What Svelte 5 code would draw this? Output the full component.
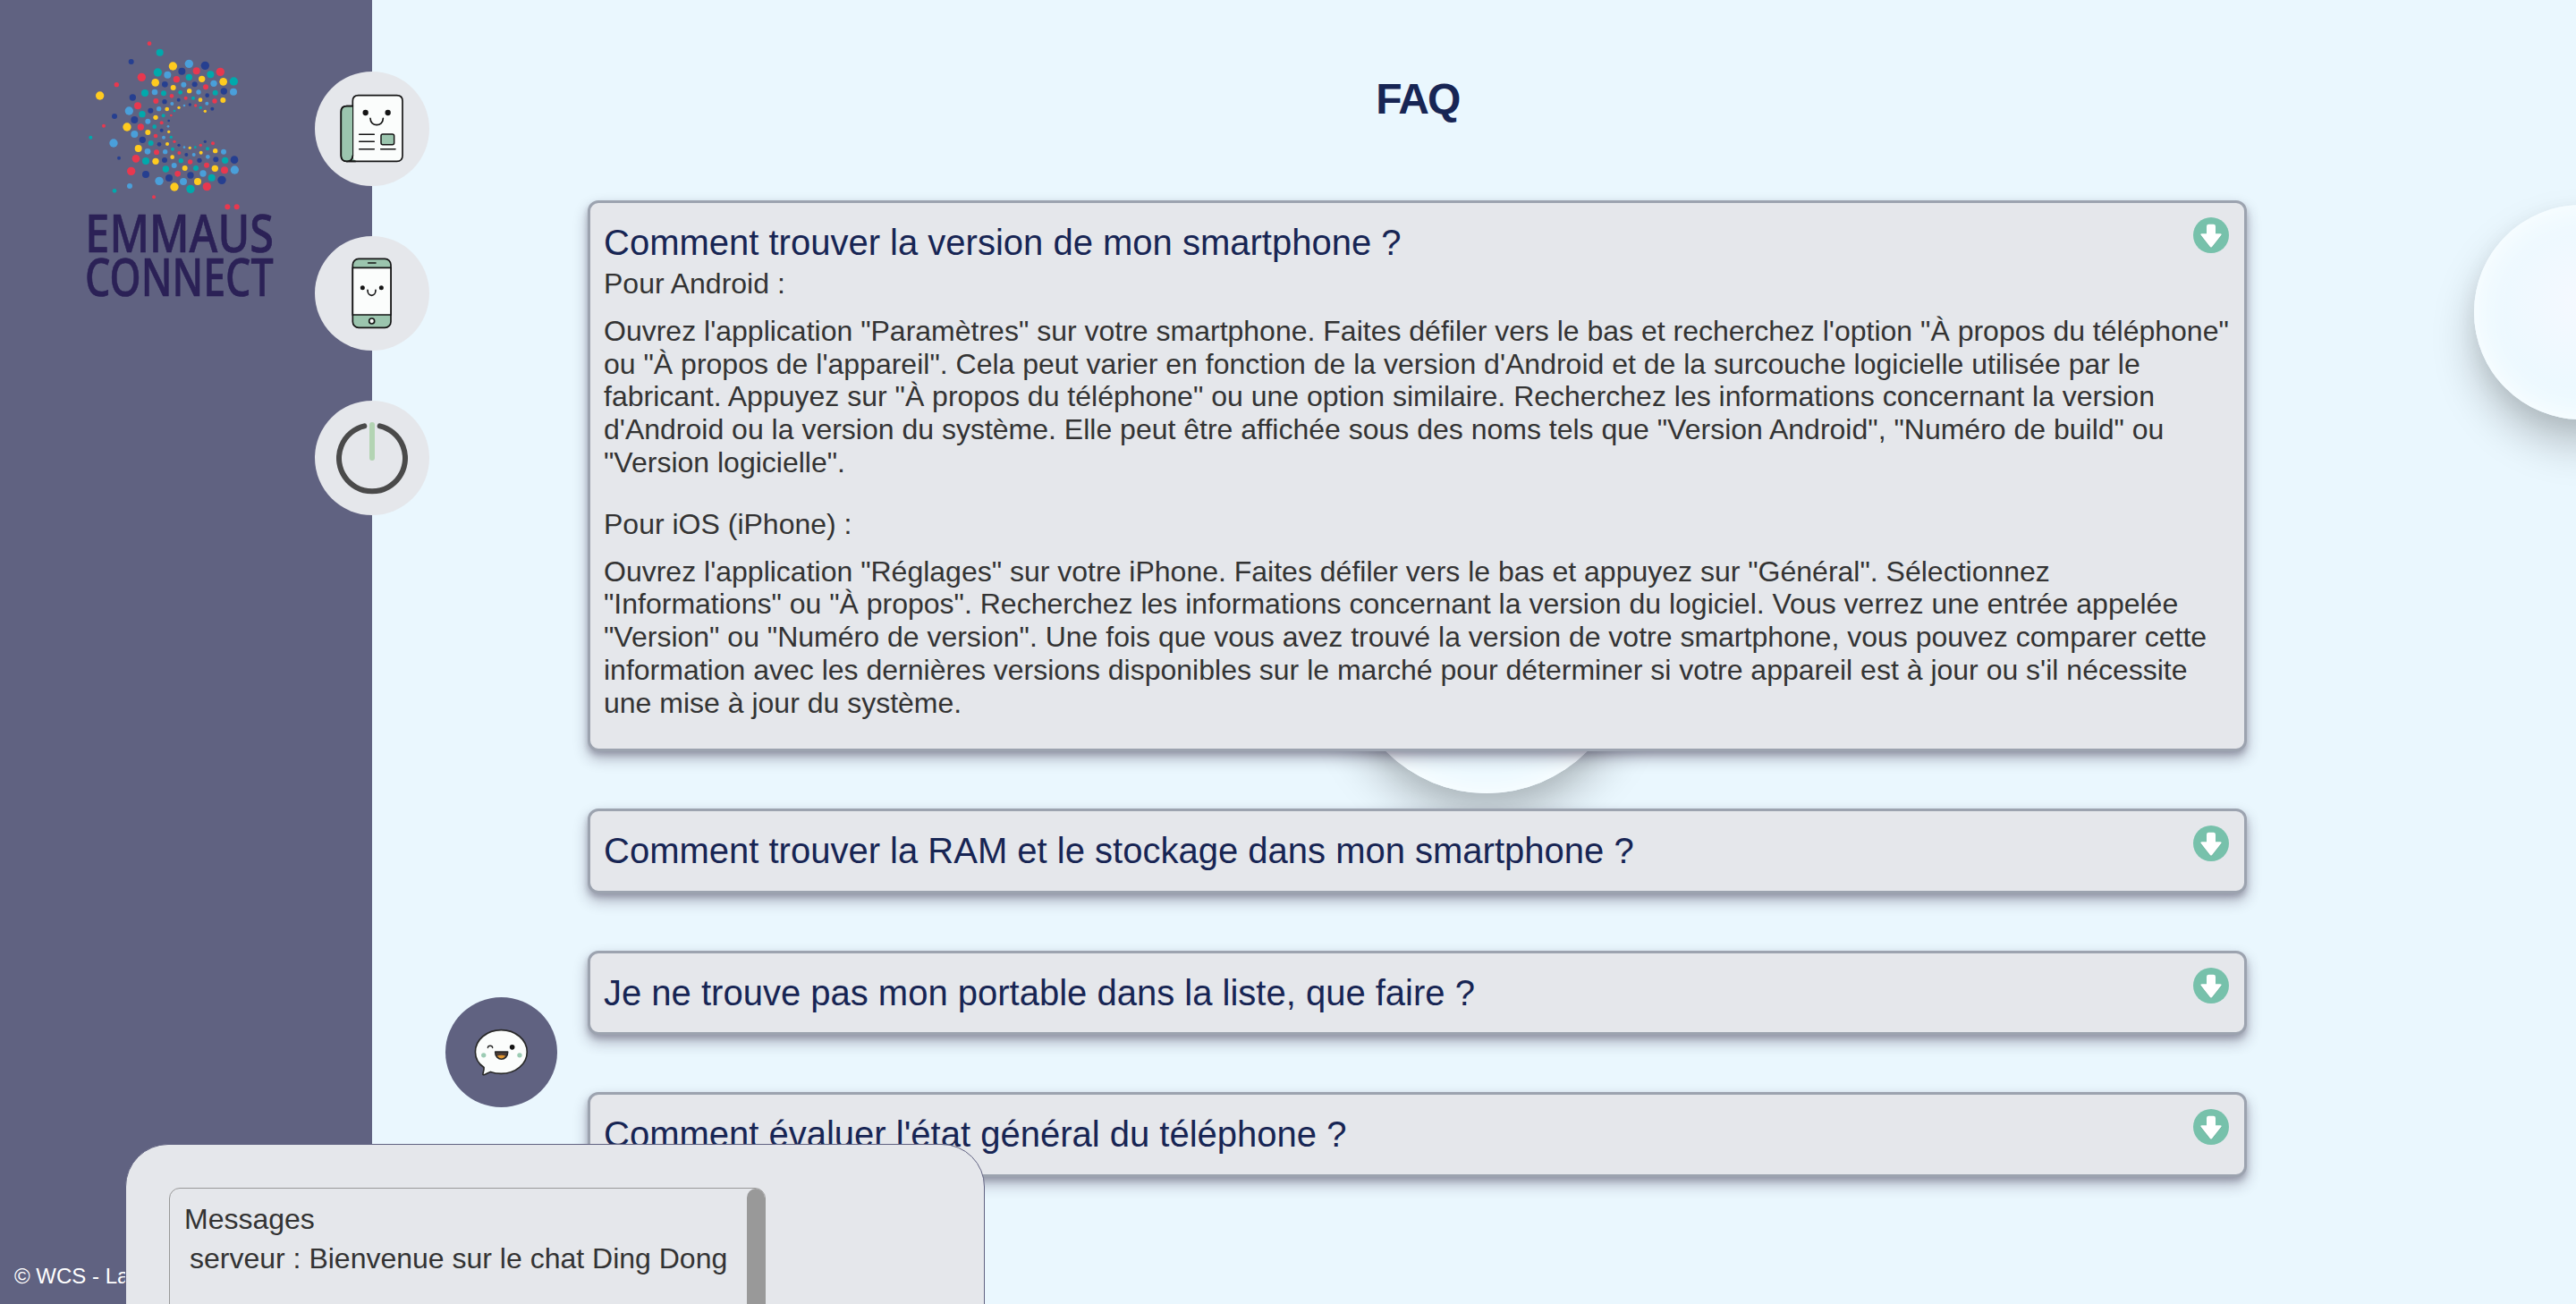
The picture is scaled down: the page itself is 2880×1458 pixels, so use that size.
<script>
  const R = '#e8384f', Y = '#ffcb1f', T = '#00a9ac', B = '#4a9fda', N = '#263f90';
  // Logo dots: [x, y, radius, colour]
  const dots = [
    [261,56,7,R],[296,86,12,T],[200,117,9,N],[235,169,14,R],[151,194,8,R],[95,231,14,Y],[289,153,14,T],[340,132,14,Y],
    [394,124,14,B],[448,130,14,N],[499,151,14,R],[544,183,14,T],[543,218,12,B],[509,184,13,Y],[466,160,12,T],[419,148,12,R],
    [370,149,12,N],[322,161,12,B],[281,187,13,Y],[246,222,12,T],[205,237,11,N],[222,265,12,R],[193,282,14,B],[144,300,9,N],
    [108,332,6,R],[186,336,14,Y],[64,371,6,T],[141,390,14,B],[211,312,12,N],[237,293,11,T],[265,281,9,N],[283,249,9,R],
    [279,219,10,B],[313,193,10,N],[352,176,11,R],[394,169,11,T],[437,175,11,Y],[477,190,11,B],[511,216,11,N],[508,246,9,Y],
    [482,221,9,T],[450,202,9,R],[413,193,9,N],[376,194,9,B],[341,204,9,Y],[309,223,9,T],[312,251,8,N],[293,275,8,B],
    [282,304,8,Y],[256,317,9,B],[232,336,11,R],[211,360,12,B],[238,379,11,N],[256,354,9,Y],[278,335,7,T],[302,322,6,R],
    [308,298,6,T],[320,276,7,Y],[336,232,7,R],[365,220,7,T],[395,215,8,Y],[426,219,8,B],[455,230,7,N],[480,249,8,R],
    [472,275,6,N],[454,257,6,B],[432,245,7,Y],[408,239,6,T],[383,239,6,R],[359,245,6,N],[337,258,6,B],[360,271,5,Y],
    [378,264,4,B],[397,261,5,N],[416,264,5,R],[433,271,5,T],[448,283,5,Y],[345,282,4,T],[334,297,4,R],[326,315,4,N],
    [324,334,4,B],[326,352,5,Y],[334,370,5,T],[345,385,5,R],[360,397,5,N],[378,404,4,B],[397,406,5,Y],[415,404,4,T],
    [433,397,5,R],[448,385,5,N],[474,391,6,R],[456,409,6,T],[434,422,6,Y],[410,429,6,B],[385,429,6,N],[361,423,6,R],
    [339,410,6,T],[321,393,6,Y],[309,371,6,B],[302,347,6,N],[282,366,7,R],[266,390,9,T],[294,394,7,N],[314,419,8,B],
    [285,421,9,R],[255,418,10,B],[224,408,12,Y],[216,442,13,R],[249,450,12,T],[282,451,11,Y],[312,447,9,N],[338,437,7,Y],
    [367,449,8,T],[398,453,8,R],[429,448,8,N],[457,436,7,B],[482,416,8,Y],[510,419,9,B],[484,445,9,N],[515,448,11,T],
    [546,446,13,N],[547,480,14,B],[513,481,12,R],[481,475,11,Y],[453,464,9,R],[417,474,9,T],[380,474,9,Y],[344,465,9,B],
    [316,477,11,T],[249,495,12,N],[200,484,14,R],[159,440,6,N],[356,493,10,R],[399,498,11,N],[441,492,11,B],[470,506,12,T],
    [504,514,14,N],[454,536,14,R],[423,519,12,Y],[375,519,12,B],[327,507,12,N],[294,517,14,B],[345,537,14,Y],[399,544,14,T],
    [195,534,9,B],[144,550,7,T],[276,571,6,R],[523,604,9,R],[554,604,9,R]
  ];

  const faqs = [
    {
      question: 'Comment trouver la version de mon smartphone ?',
      answers: [
        ['Pour Android :', `Ouvrez l'application "Paramètres" sur votre smartphone. Faites défiler vers le bas et recherchez l'option "À propos du téléphone" ou "À propos de l'appareil". Cela peut varier en fonction de la version d'Android et de la surcouche logicielle utilisée par le fabricant. Appuyez sur "À propos du téléphone" ou une option similaire. Recherchez les informations concernant la version d'Android ou la version du système. Elle peut être affichée sous des noms tels que "Version Android", "Numéro de build" ou "Version logicielle".`],
        ['Pour iOS (iPhone) :', `Ouvrez l'application "Réglages" sur votre iPhone. Faites défiler vers le bas et appuyez sur "Général". Sélectionnez "Informations" ou "À propos". Recherchez les informations concernant la version du logiciel. Vous verrez une entrée appelée "Version" ou "Numéro de version". Une fois que vous avez trouvé la version de votre smartphone, vous pouvez comparer cette information avec les dernières versions disponibles sur le marché pour déterminer si votre appareil est à jour ou s'il nécessite une mise à jour du système.`]
      ]
    },
    { question: 'Comment trouver la RAM et le stockage dans mon smartphone ?', answers: [] },
    { question: 'Je ne trouve pas mon portable dans la liste, que faire ?', answers: [] },
    { question: "Comment évaluer l'état général du téléphone ?", answers: [] }
  ];
</script>

<div class="page">
  <aside>
    <svg class="logo" viewBox="0 0 750 960">
      {#each dots as [x, y, r, fill]}
        <circle cx={x} cy={y} {r} {fill} />
      {/each}
      <text x="46" y="756" textLength="632" lengthAdjust="spacingAndGlyphs">EMMAUS</text>
      <text x="45" y="904" textLength="632" lengthAdjust="spacingAndGlyphs">CONNECT</text>
    </svg>
    <nav>
      <button class="round" aria-label="Articles">
        <svg viewBox="0 0 384 384" fill="none" stroke="#151515" stroke-width="5" stroke-linecap="round">
          <path d="M127 116H107q-19 0-19 19V282q0 19 19 19h30" fill="#9bc5ae" />
          <rect x="127" y="80" width="167" height="221" rx="18" fill="#fbfdfc" stroke="none" />
          <path d="M107 301h168q19 0 19-19V99q0-19-19-19H146q-19 0-19 19V282q0 19-20 19" />
          <path d="M90 137V282q0 17 18 17t18-17V118H108q-18 0-18 19z" fill="#9bc5ae" stroke="none" />
          <path d="M127 116H107q-19 0-19 19V282q0 19 19 19t20-19" />
          <path d="M186 157c0 29 43 29 43 0" />
          <g stroke-width="4.5"><path d="M149 211h50M149 235h50M149 260h50M221 260h49" /><rect x="222" y="210" width="44" height="35" rx="6" fill="#9bc5ae" /></g>
          <g fill="#151515" stroke="none"><circle cx="170" cy="138" r="9.5" /><circle cx="245" cy="138" r="9.5" /></g>
        </svg>
      </button>
      <button class="round" aria-label="Smartphones">
        <svg viewBox="0 0 384 384" fill="none" stroke="#151515" stroke-width="5" stroke-linecap="round">
          <rect x="127" y="76" width="128" height="231" rx="20" fill="#9bc5ae" />
          <path d="M127 106h128v158H127z" fill="#fbfdfc" />
          <path d="M179 90h25M177 181c0 24 27 24 27 0" />
          <circle cx="191" cy="285" r="9" fill="#fbfdfc" />
          <g fill="#151515" stroke="none"><circle cx="160" cy="173" r="7.5" /><circle cx="223" cy="173" r="7.5" /></g>
        </svg>
      </button>
      <button class="round" aria-label="Déconnexion">
        <svg viewBox="0 0 384 384" fill="none" stroke-width="18" stroke-linecap="round">
          <path d="M166 85A111 111 0 1 0 218 85" stroke="#4a4a4a" />
          <path d="M192 81V192" stroke="#b3d4b3" />
        </svg>
      </button>
    </nav>
    <footer>© WCS - La Loupe</footer>
  </aside>

  <main>
    <span class="bubble bubble-right"></span>
    <span class="bubble bubble-center"></span>
    <h1>FAQ</h1>
    {#each faqs as { question, answers }}
      <article class:open={answers.length > 0}>
        <h2>{question}</h2>
        {#each answers as [title, text]}
          <h3>{title}</h3>
          <p>{text}</p>
        {/each}
        <svg class="arrow" viewBox="0 0 120 120">
          <circle cx="60" cy="60" r="60" fill="#77c1ab" />
          <path d="M45 30q0-7 7-7h16q7 0 7 7v25h16q6 0 3 5L64 98q-4 5-8 0L26 60q-3-5 3-5h16z" fill="#5da38e" transform="translate(0 2)" />
          <path d="M45 30q0-7 7-7h16q7 0 7 7v25h16q6 0 3 5L64 98q-4 5-8 0L26 60q-3-5 3-5h16z" fill="#fff" />
        </svg>
      </article>
    {/each}
  </main>

  <button class="chat-toggle" aria-label="Chat">
    <svg viewBox="0 0 375 370" fill="none" stroke="#2a2a2a" stroke-width="5" stroke-linecap="round" stroke-linejoin="round">
      <path d="M129 236C110 223 100 205 100 184c0-41 39-74 87-74s87 33 87 74-39 73-87 73c-13 0-25-2-36-6-9 3-15 8-22 10-8 1 1-11 0-25z" fill="#fbfdfc" />
      <path d="M142 170c0-9 16-9 16 0" stroke-width="4" />
      <circle cx="224" cy="168" r="8.5" fill="#151515" stroke="none" />
      <path d="M167 184h42c0 32-42 32-42 0z" fill="#4a3b34" />
      <path d="M173 198q14-6 29 0-14 16-29 0z" fill="#e0952f" stroke="none" />
      <g fill="#9bcbb3" stroke="none"><circle cx="128" cy="195" r="8" /><circle cx="249" cy="195" r="8" /></g>
    </svg>
  </button>

  <section class="chat">
    <div class="messages">
      <div class="list">
        <div>Messages</div>
        <div class="message">serveur : Bienvenue sur le chat Ding Dong</div>
      </div>
      <span class="scrollbar"></span>
    </div>
  </section>
</div>

<style>
  :global(body) { margin: 0; overflow: hidden; }
  .page {
    position: relative;
    display: flex;
    width: 2880px;
    height: 1458px;
    overflow: hidden;
    background: #eaf7fe;
    color: #333;
    font: 32px/36.8px "Liberation Sans", Arial, sans-serif;
  }
  h1, h2, h3, p { margin: 0; font-weight: 400; }
  button { border: 0; padding: 0; display: block; }
  svg { display: block; }
  aside {
    position: relative;
    z-index: 2;
    box-sizing: border-box;
    width: 416px;
    flex: none;
    display: flex;
    justify-content: space-between;
    padding: 30px 0 0 80px;
    background: #606281;
  }
  .logo { width: 250px; height: 320px; flex: none; overflow: visible; }
  .logo text { font: 500 176px "Noto Sans", "Open Sans", sans-serif; fill: #2b2156; stroke: #2b2156; stroke-width: 2px; }
  nav { display: flex; flex-direction: column; gap: 56px; margin: 50px -64px 0 0; }
  .round { width: 128px; height: 128px; border-radius: 50%; background: #e5e7eb; }
  .round svg { width: 128px; height: 128px; }
  footer { position: absolute; left: 16px; bottom: 17px; font-size: 24px; line-height: 28px; color: #fff; white-space: nowrap; }

  main {
    position: relative;
    flex: 1;
    display: flex;
    flex-direction: column;
    align-items: center;
    padding: 83px 128px 0 0;
  }
  h1 { position: relative; color: #172554; font-size: 48px; line-height: 55px; font-weight: 700; letter-spacing: -1.8px; margin: 0 0 86px 2px; }
  article {
    position: relative;
    box-sizing: border-box;
    width: 1855px;
    min-height: 94.4px;
    margin-bottom: 64px;
    padding: 21px 14px 0 15.5px;
    border: 3px solid #9ca3af;
    border-radius: 12px;
    background: #e5e7eb;
    box-shadow: 0 8px 16px rgba(40, 30, 60, .32), 0 4px 6px rgba(40, 30, 60, .22);
  }
  article.open { padding-bottom: 32.8px; }
  h2 { color: #172554; font-size: 40px; line-height: 46px; }
  h3 { font-size: 32px; line-height: 36.8px; margin: 5px 0 16px; }
  p + h3 { margin-top: 32px; }
  .arrow { position: absolute; top: 16px; right: 16.5px; width: 40px; height: 40px; }

  .bubble {
    position: absolute;
    border-radius: 50%;
    background: radial-gradient(circle at 50% 45%, #f5f9ff 0, #ebf9ff 65%);
    box-shadow: inset 0 0 40px #fff, 0 28px 48px rgba(0, 0, 0, .22), 0 8px 24px rgba(0, 0, 0, .06);
  }
  .bubble-right { left: 2350px; top: 229px; width: 240px; height: 240px; }
  .bubble-center { left: 1088px; top: 571px; width: 316px; height: 316px; }

  .chat-toggle {
    position: absolute;
    left: 497.5px;
    top: 1115px;
    width: 125px;
    height: 123px;
    border-radius: 50%;
    background: #606281;
  }
  .chat-toggle svg { width: 125px; height: 123px; }
  .chat {
    position: absolute;
    z-index: 3;
    left: 140px;
    top: 1279px;
    box-sizing: border-box;
    width: 961px;
    height: 300px;
    padding: 48px;
    border: 1.5px solid #606281;
    border-radius: 48px;
    background: #e5e7eb;
  }
  .messages {
    display: flex;
    box-sizing: border-box;
    width: 667px;
    height: 240px;
    border: 1px solid #999;
    border-radius: 12px;
    overflow: hidden;
  }
  .list { flex: 1; padding: 16px 0 0 16px; white-space: nowrap; }
  .message { padding: 7px 0 0 6px; }
  .scrollbar { width: 20px; border-radius: 12px; background: #999; }
</style>
